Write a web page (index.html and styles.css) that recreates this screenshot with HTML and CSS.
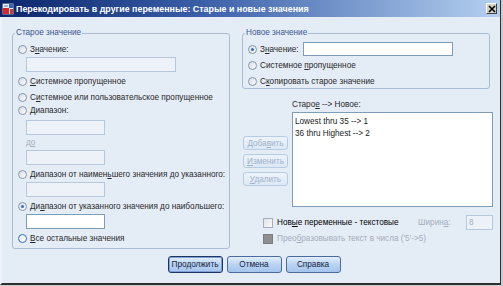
FILE: index.html
```html
<!DOCTYPE html>
<html lang="ru">
<head>
  <meta charset="UTF-8" />
  <title>Перекодировать в другие переменные</title>
  <link rel="stylesheet" href="styles.css">
</head>
<body>
  <div class="window">
    <div class="titlebar">
      <svg class="app-icon" width="12" height="12" viewBox="0 0 12 12">
        <rect x="0.5" y="0.5" width="11" height="11" rx="1" fill="#e8eef8" stroke="#5b6f9a"/>
        <rect x="1" y="5" width="6" height="6" fill="#d8262a"/>
        <rect x="7" y="1" width="4" height="4" fill="#3f62b4"/>
        <rect x="2" y="2" width="4" height="2" fill="#9fb4dc"/>
        <rect x="8" y="6" width="3" height="5" fill="#c33a3a"/>
      </svg>
      <span class="title">Перекодировать в другие переменные: Старые и новые значения</span>
      <span class="close">
        <svg width="8" height="8" viewBox="0 0 8 8"><path d="M1 1 L7 7 M7 1 L1 7" stroke="#000" stroke-width="1.6"/></svg>
      </span>
    </div>

    <div class="content">
      <div class="columns">
        <fieldset class="group old">
          <legend>Старое значение</legend>
          <div class="radio first"><span class="mark"></span><span>З<u>н</u>ачение:</span></div>
          <span class="field wide"></span>
          <div class="radio"><span class="mark"></span><span><u>С</u>истемное пропущенное</span></div>
          <div class="radio"><span class="mark"></span><span>С<u>и</u>стемное или пользовательское пропущенное</span></div>
          <div class="radio tight"><span class="mark"></span><span>Диапазон:</span></div>
          <span class="field short spaced"></span>
          <div class="sub-label">д<u>о</u></div>
          <span class="field short"></span>
          <div class="radio"><span class="mark"></span><span>Диапазон от наимен<u>ь</u>шего значения до указанного:</span></div>
          <span class="field short"></span>
          <div class="radio"><span class="mark on"></span><span>Ди<u>а</u>пазон от указанного значения до наибольшего:</span></div>
          <span class="field short active"></span>
          <div class="radio"><span class="mark focus"></span><span><u>В</u>се остальные значения</span></div>
        </fieldset>

        <div class="right">
          <fieldset class="group new">
            <legend>Новое значение</legend>
            <div class="radio first">
              <span class="mark on"></span><span class="value-label">З<u>н</u>ачение:</span>
              <span class="field value active"></span>
            </div>
            <div class="radio"><span class="mark"></span><span>Системное <u>п</u>ропущенное</span></div>
            <div class="radio"><span class="mark"></span><span>С<u>к</u>опировать старое значение</span></div>
          </fieldset>

          <div class="mapping">
            <div class="side-buttons">
              <button class="btn small" disabled>Доба<u>в</u>ить</button>
              <button class="btn small" disabled><u>И</u>зменить</button>
              <button class="btn small" disabled><u>У</u>далить</button>
            </div>
            <div class="list-col">
              <div class="list-label">Старо<u>е</u> --&gt; Новое:</div>
              <div class="list">
                <div class="list-item">Lowest thru 35 --&gt; 1</div>
                <div class="list-item">36 thru Highest --&gt; 2</div>
              </div>
            </div>
          </div>

          <div class="options">
            <div class="option-row">
              <span class="check"></span>
              <span class="option-text">Нов<u>ы</u>е переменные - текстовые</span>
              <span class="width-label">Ширин<u>а</u>:</span>
              <span class="field width-input">8</span>
            </div>
            <div class="option-row second">
              <span class="check filled"></span>
              <span class="option-text muted">Прео<u>б</u>разовывать текст в числа ('5'-&gt;5)</span>
            </div>
          </div>
        </div>
      </div>

      <div class="actions">
        <button class="btn default">Продолжить</button>
        <button class="btn">Отмена</button>
        <button class="btn">Справка</button>
      </div>
    </div>
  </div>
</body>
</html>
```

FILE: styles.css
```css
* {
  margin: 0;
  padding: 0;
  box-sizing: border-box;
}
html, body {
  width: 503px;
  height: 286px;
  overflow: hidden;
  background: #c9ccd0;
}
body {
  font-family: "Liberation Sans", Arial, sans-serif;
  font-size: 8.2px;
  color: #2a2a2a;
}
u {
  text-decoration-thickness: 1px;
  text-underline-offset: 1px;
}
.window {
  width: 501px;
  height: 285px;
  background: #e4ecf6;
  border-left: 2px solid #eef3f9;
  border-right: 1px solid #2f2f2f;
  border-bottom: 2px solid #2f2f2f;
  display: flex;
  flex-direction: column;
}
.titlebar {
  height: 17px;
  margin-left: -2px;
  display: flex;
  align-items: center;
  padding: 0 3px 0 2px;
  background: linear-gradient(to right, #0a246a 0%, #3a5fa8 40%, #b4d0f0 100%);
}
.app-icon {
  flex: none;
}
.title {
  margin-left: 2px;
  color: #fff;
  font-weight: bold;
  font-size: 8.9px;
  white-space: nowrap;
}
.close {
  margin-left: auto;
  width: 11px;
  height: 11px;
  display: flex;
  align-items: center;
  justify-content: center;
  background: #d4d0c8;
  border: 1px solid;
  border-color: #fff #404040 #404040 #fff;
}
.content {
  flex: 1;
  padding: 10px 7px 0 10px;
}
.columns {
  display: flex;
  gap: 12px;
}

/* group boxes */
.group {
  min-width: 0;
  border: 1px solid #a9bcd4;
  border-radius: 3px;
}
.group legend {
  margin-left: -3px;
  padding: 0 1px;
  line-height: 12px;
  color: #3b5695;
}
.old {
  flex: none;
  width: 218px;
  padding: 4px 0 3px 5px;
  display: flex;
  flex-direction: column;
}
.right {
  flex: none;
  width: 251px;
  display: flex;
  flex-direction: column;
}
.new {
  margin-right: 3px;
  padding: 3px 0 0 5px;
}

/* radios and fields */
.radio {
  height: 13px;
  display: flex;
  align-items: center;
  margin-top: 3px;
  white-space: nowrap;
}
.radio.first {
  margin-top: 0;
}
.radio.tight {
  margin-top: 0;
}
.new .radio.first {
  height: 14px;
}
.mark {
  position: relative;
  flex: none;
  width: 9px;
  height: 9px;
  margin-right: 3px;
  border-radius: 50%;
  border: 1px solid #8796aa;
  background: linear-gradient(135deg, #d6dde6, #fbfcfe);
}
.mark.on::after {
  content: "";
  position: absolute;
  inset: 2px;
  border-radius: 50%;
  background: #3a69c9;
}
.mark.focus {
  border-color: #3a69c9;
  background: linear-gradient(135deg, #e2eaf6, #fff);
}
.field {
  display: block;
  height: 15px;
  margin: 1px 0 0 8px;
  border: 1px solid #b8c8dc;
  background: #edf2f9;
}
.field.spaced {
  margin-top: 3px;
}
.field.wide {
  width: 150px;
}
.field.short {
  width: 79px;
}
.field.active {
  background: #fff;
  border-color: #7f9db9;
}
.sub-label {
  height: 12px;
  line-height: 12px;
  margin: 2px 0 0 8px;
  color: #a4adbb;
}
.value-label {
  flex: none;
  width: 43px;
}
.field.value {
  width: 150px;
  height: 14px;
  margin: 0;
}

/* mapping list */
.mapping {
  display: flex;
  gap: 4px;
  margin-top: 10px;
}
.side-buttons {
  flex: none;
  width: 45px;
  margin-left: 1px;
  padding-top: 37px;
  display: flex;
  flex-direction: column;
  gap: 4px;
}
.list-col {
  flex: 1;
}
.list-label {
  height: 12px;
  line-height: 12px;
  margin-bottom: 1px;
}
.list {
  height: 95px;
  padding: 3px 2px;
  background: #fff;
  border: 1px solid #7f9db9;
}
.list-item {
  line-height: 12px;
  color: #1a1a1a;
}

/* options */
.options {
  margin-top: 8px;
  padding-left: 21px;
}
.option-row {
  height: 15px;
  display: flex;
  align-items: center;
}
.option-row.second {
  height: 13px;
  margin-top: 2px;
}
.check {
  flex: none;
  width: 10px;
  height: 10px;
  border: 1px solid #a6aebb;
  background: linear-gradient(135deg, #dfe3e8, #fafbfc);
}
.check.filled {
  border-color: #7d7d7d;
  background: #8f8f8f;
}
.option-text {
  margin-left: 4px;
  color: #000;
  white-space: nowrap;
}
.option-text.muted {
  color: #a4adbb;
}
.width-label {
  margin-left: auto;
  width: 48px;
  color: #a4adbb;
}
.field.width-input {
  width: 27px;
  margin: 0;
  padding-left: 2px;
  line-height: 13px;
  color: #a4adbb;
}

/* buttons */
.btn {
  height: 17px;
  width: 55px;
  padding: 0;
  font: inherit;
  color: #15233d;
  border: 1px solid #4a6c9c;
  border-radius: 3px;
  background: linear-gradient(#e3eefc, #b9d3f3 50%, #a5c5ee);
}
.btn.default {
  border-color: #1d3563;
  box-shadow: inset 0 0 0 1px #7ea2d6;
}
.btn.small {
  width: 45px;
  height: 14px;
}
.btn:disabled {
  color: #9fb1cb;
  border-color: #b7cbe3;
  background: linear-gradient(#edf3fb, #dce8f6);
}
.actions {
  margin-top: 7px;
  padding-left: 3px;
  display: flex;
  justify-content: center;
  gap: 4px;
}
```
